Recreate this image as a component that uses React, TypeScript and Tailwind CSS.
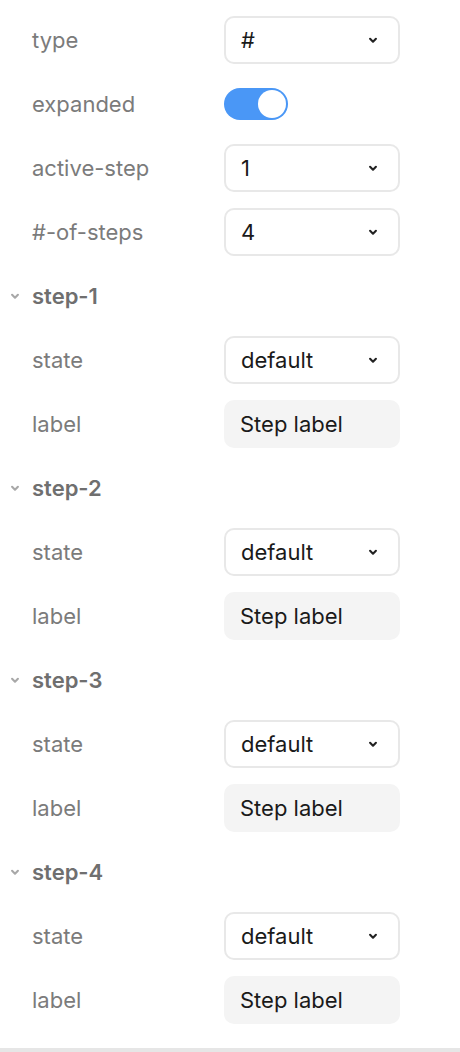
import { ReactNode } from 'react';

const font = { fontFamily: 'Inter, "Noto Sans", sans-serif' };

function Chevron({ className }: { className?: string }) {
    return (
        <svg className={className} viewBox="0 0 12 12" fill="none" stroke="currentColor" strokeWidth="1.8" strokeLinecap="round" strokeLinejoin="round">
            <path d="M3.5 5l2.5 2.5L8.5 5" />
        </svg>
    );
}

function Row({ label, children }: { label: string; children: ReactNode }) {
    return (
        <div className="flex items-center h-16 pl-8">
            <div className="w-[192px] text-[22px] text-[#7b7b7b]">{label}</div>
            {children}
        </div>
    );
}

function Select({ value }: { value: string }) {
    return (
        <div className="flex items-center justify-between w-[176px] h-[48px] pl-[15px] pr-[18px] border-2 border-[#e8e8e8] rounded-[10px] bg-white text-[22px] text-[#1a1a1a]">
            <span>{value}</span>
            <Chevron className="w-[14px] h-[14px] text-[#222]" />
        </div>
    );
}

function TextField({ value }: { value: string }) {
    return (
        <div className="flex items-center w-[176px] h-[48px] pl-[16px] rounded-[10px] bg-[#f4f4f4] text-[22px] text-[#1a1a1a]">
            {value}
        </div>
    );
}

function Toggle() {
    return (
        <div className="flex items-center justify-end w-[64px] h-[32px] rounded-full bg-[#4a97f6] p-[2px]">
            <div className="w-[28px] h-[28px] rounded-full bg-white" />
        </div>
    );
}

function Section({ name }: { name: string }) {
    return (
        <div className="flex items-center h-16 pl-[8px]">
            <Chevron className="w-[14px] h-[14px] text-[#a8a8a8] mr-[10px]" />
            <span className="text-[22px] font-semibold text-[#6f6f6f]">{name}</span>
        </div>
    );
}

export default function App() {
    const steps = ['step-1', 'step-2', 'step-3', 'step-4'];
    return (
        <div className="w-[460px] h-[1052px] bg-white pt-2 flex flex-col" style={font}>
            <Row label="type"><Select value="#" /></Row>
            <Row label="expanded"><Toggle /></Row>
            <Row label="active-step"><Select value="1" /></Row>
            <Row label="#-of-steps"><Select value="4" /></Row>
            {steps.map((s) => (
                <div key={s}>
                    <Section name={s} />
                    <Row label="state"><Select value="default" /></Row>
                    <Row label="label"><TextField value="Step label" /></Row>
                </div>
            ))}
            <div className="mt-auto h-[4px] bg-[#e6e6e6]" />
        </div>
    );
}
